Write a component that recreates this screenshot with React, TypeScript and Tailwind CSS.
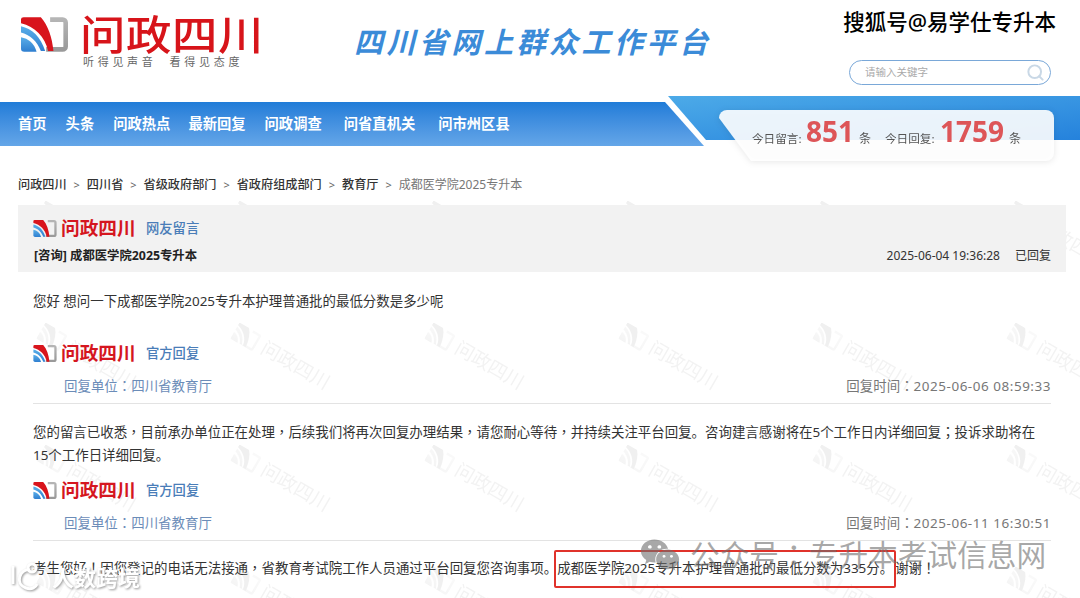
import { Search } from "lucide-react";
import { FaWeixin } from "react-icons/fa";

const cjk = "font-['Noto_Sans','Noto_Sans_CJK_SC',sans-serif]";

const navItems = [
  { label: "首页", gap: "mr-[19px]" },
  { label: "头条", gap: "mr-[19px]" },
  { label: "问政热点", gap: "mr-[18px]" },
  { label: "最新回复", gap: "mr-[19px]" },
  { label: "问政调查", gap: "mr-[22px]" },
  { label: "问省直机关", gap: "mr-[23px]" },
  { label: "问市州区县", gap: "" },
];

const crumbs = ["问政四川", "四川省", "省级政府部门", "省政府组成部门", "教育厅"];

// 原图的逗号、冒号、叹号是居中的，换成繁体字形
function centerPunct(text: string) {
  return text.split(/([，：！；])/).map((part, i) =>
    i % 2 === 1 ? (
      <span key={i} className="font-['Noto_Sans_CJK_TC',sans-serif]">{part}</span>
    ) : (
      part
    )
  );
}

function LogoIcon({ className }: { className: string }) {
  return (
    <svg viewBox="0 0 142 104" className={className}>
      <defs>
        <linearGradient id="lg-gray" x1="0" y1="0" x2="0" y2="1">
          <stop offset="0" stopColor="#b5b5b5" />
          <stop offset="1" stopColor="#9a9a9a" />
        </linearGradient>
        <linearGradient id="lg-blue" x1="0" y1="0" x2="0" y2="1">
          <stop offset="0" stopColor="#5aaee8" />
          <stop offset="1" stopColor="#2f7fd0" />
        </linearGradient>
      </defs>
      <path d="M88 7H126a9 9 0 0 1 9 9V88a9 9 0 0 1-9 9H76" fill="none" stroke="url(#lg-gray)" strokeWidth="14" />
      <path d="M0 6Q0 0 8 0H60C82 25 94 60 98 102H82C72 58 42 28 0 18Z" fill="#d8141c" />
      <path d="M0 27C32 34 60 58 73 102H60C50 74 26 52 0 46Z" fill="url(#lg-blue)" />
      <path d="M0 60C22 64 40 78 47 104H10Q0 104 0 94Z" fill="url(#lg-blue)" />
    </svg>
  );
}

function SectionHead({ label }: { label: string }) {
  return (
    <div className="flex items-center h-[20px]">
      <LogoIcon className="w-[24px] h-[17px] mr-[4px]" />
      <span className="text-[18.7px] leading-none font-bold text-[#d5161f] w-[75px] whitespace-nowrap">问政四川</span>
      <span className="ml-[10px] mt-[2px] text-[13.3px] font-medium text-[#4a7db8]">{label}</span>
    </div>
  );
}

function ReplyMeta({ time }: { time: string }) {
  return (
    <div className="flex justify-between items-center h-[26px] mt-[10px] pl-[31px] border-b border-[#e3e3e3] pb-[4px] box-content text-[13.45px]">
      <span className="text-[#6b8cb8]">回复单位{centerPunct("：")}四川省教育厅</span>
      <span className="text-[#777]">回复时间{centerPunct("：")}<span className="tracking-[0.55px]">{time}</span></span>
    </div>
  );
}

function Watermarks() {
  const cells = Array.from({ length: 30 });
  return (
    <div className="absolute left-[41px] top-[196px] grid grid-cols-[repeat(6,194px)] auto-rows-[122px] opacity-[0.07]">
      {cells.map((_, i) => (
        <div key={i} className="flex items-center gap-[6px] w-[120px] h-[24px] rotate-[30deg] origin-left text-[#555]">
          <LogoIcon className="w-[26px] h-[19px] grayscale" />
          <span className="text-[19px] leading-none whitespace-nowrap">问政四川</span>
        </div>
      ))}
    </div>
  );
}

export default function App() {
  return (
    <div className={`${cjk} relative w-[1080px] h-[598px] overflow-hidden bg-white text-[#333]`}>
      <Watermarks />

      <div className="relative">
        <header className="flex h-[102px] items-start">
          <div className="ml-[21px] mt-[14px] w-[300px]">
            <div className="flex items-center">
              <LogoIcon className="w-[47px] h-[35px] mr-[14px]" />
              <span className="text-[45.5px] leading-[40px] -ml-[2px] tracking-[0.5px] font-medium text-[#d7141a] whitespace-nowrap scale-y-[0.9] origin-center">问政四川</span>
            </div>
            <div className="ml-[62px] mt-[1px] text-[11px] leading-[14px] tracking-[3.7px] text-[#666] whitespace-nowrap">听得见声音&nbsp;&nbsp;看得见态度</div>
          </div>
          <div className="ml-[33px] mt-[20px] text-[29px] leading-[44px] tracking-[3.5px] font-bold italic text-[#3b8bd8] whitespace-nowrap">四川省网上群众工作平台</div>
          <div className="ml-auto mr-[29px] mt-[60px] w-[202px] h-[25px] flex items-center justify-between rounded-full border border-[#7aa8d8] pl-[15px] pr-[5px]">
            <span className="text-[10.5px] text-[#aaa]">请输入关键字</span>
            <Search className="w-[19px] h-[19px] text-[#c9d8e6]" strokeWidth={2.5} />
          </div>
        </header>

        <div className="flex items-start h-[68px]">
          <nav className="w-[704px] h-[44px] shrink-0 flex items-center pl-[18px] bg-gradient-to-b from-[#1f7cd8] to-[#64a6e8] [clip-path:polygon(0_0,665px_0,100%_100%,0_100%)] text-white text-[14.3px] font-bold">
            {navItems.map((item) => (
              <span key={item.label} className={`${item.gap} whitespace-nowrap`}>{item.label}</span>
            ))}
          </nav>
          <div className="relative flex-1 h-[44px] -ml-[36px] -mt-[6px]">
            <div className="absolute inset-0 bg-gradient-to-br from-[#4caae8] to-[#2582dc] [clip-path:polygon(0_0,100%_0,100%_100%,38px_100%)]" />
            <div className="relative ml-[51px] mt-[14px] w-[335px] [filter:drop-shadow(0_1px_3px_rgba(0,0,0,0.1))]">
              <div className="h-[51px] flex items-start pl-[33px] pt-[3px] rounded-lg bg-white/90 [clip-path:polygon(0_0,100%_0,100%_100%,32px_100%,0_8px)] text-[12px] text-[#555] whitespace-nowrap">
                <span className="mt-[17px] w-[54px] text-[11.6px]">今日留言:</span>
                <span className="font-['Open_Sans',sans-serif] text-[28px] leading-[36px] font-bold text-[#dd5558] w-[53px]">851</span>
                <span className="mt-[17px] w-[26px]">条</span>
                <span className="mt-[17px] w-[55px] text-[11.6px]">今日回复:</span>
                <span className="font-['Open_Sans',sans-serif] text-[28px] leading-[36px] font-bold text-[#dd5558] w-[69px]">1759</span>
                <span className="mt-[17px]">条</span>
              </div>
            </div>
          </div>
        </div>

        <main className="px-[18px] w-[1066px] box-content">
          <div className="flex items-center h-[35px] pb-[5px] text-[12.15px] font-medium text-[#333] whitespace-nowrap">
            {crumbs.map((c) => (
              <span key={c} className="flex items-center">
                {c}
                <span className="w-[20.3px] text-center font-normal text-[#666] text-[11px]">&gt;</span>
              </span>
            ))}
            <span className="font-normal text-[12px] text-[#777]">成都医学院2025专升本</span>
          </div>

          <div className="w-[1048px]">
            <div className="h-[67px] bg-[#f2f2f2] px-[15px] pt-[13px]">
              <SectionHead label="网友留言" />
              <div className="flex justify-between items-center mt-[9px] text-[12px]">
                <span className="ml-[1px] text-[12.35px] font-bold text-[#222]">[咨询] 成都医学院2025专升本</span>
                <span className="text-[#333]">2025-06-04 19:36:28<span className="ml-[15px]">已回复</span></span>
              </div>
            </div>

            <div className="px-[15px] text-[13.45px] text-[#333]">
              <p className="mt-[19px] leading-[20px]">您好 想问一下成都医学院2025专升本护理普通批的最低分数是多少呢</p>

              <div className="mt-[32px]"><SectionHead label="官方回复" /></div>
              <ReplyMeta time="2025-06-06 08:59:33" />
              <p className="mt-[16px] leading-[23px]">
                {centerPunct("您的留言已收悉，目前承办单位正在处理，后续我们将再次回复办理结果，请您耐心等待，并持续关注平台回复。咨询建言感谢将在5个工作日内详细回复；投诉求助将在")}
                <br />
                15个工作日详细回复。
              </p>

              <div className="mt-[13px]"><SectionHead label="官方回复" /></div>
              <ReplyMeta time="2025-06-11 16:30:51" />
              <p className="mt-[15px] leading-[23px] whitespace-nowrap">
                {centerPunct("考生您好！因您登记的电话无法接通，省教育考试院工作人员通过平台回复您咨询事项。")}
                <span className="relative">
                  成都医学院2025专升本护理普通批的最低分数为335分。
                  <span className="absolute left-[-3px] right-[-3px] top-[-9px] bottom-[-11px] rounded-[2px] border-2 border-[#e0322b]" />
                </span>
                <span className="ml-[2px]">{centerPunct("谢谢！")}</span>
              </p>
            </div>
          </div>
        </main>
      </div>

      <div className="absolute right-[24px] top-[8px] text-[21.5px] leading-[28px] font-medium text-black [text-shadow:1px_1px_0_#fff,-1px_0_0_#fff] whitespace-nowrap">搜狐号@易学仕专升本</div>

      <div className="absolute left-[640px] top-[534px] flex items-center text-[#6e6e6e]/60 whitespace-nowrap">
        <FaWeixin className="w-[40px] h-[40px] mr-[10px]" />
        <span className="text-[29.7px] leading-[40px]">公众号{centerPunct("：")}专升本考试信息网</span>
      </div>

      <div className="absolute left-[8px] bottom-[6px] flex items-center text-white [filter:drop-shadow(1px_1px_1px_#999)] whitespace-nowrap">
        <svg viewBox="0 0 34 30" className="w-[34px] h-[30px] mr-[10px]" fill="none" stroke="#fff" strokeWidth="3">
          <path d="M5 4V22" />
          <path d="M22 8C12 6 6 22 18 26C24 28 28 25 29 22" />
          <circle cx="24" cy="6" r="4" />
        </svg>
        <span className="text-[22px] leading-[30px] font-bold">人数跨境</span>
      </div>
    </div>
  );
}
